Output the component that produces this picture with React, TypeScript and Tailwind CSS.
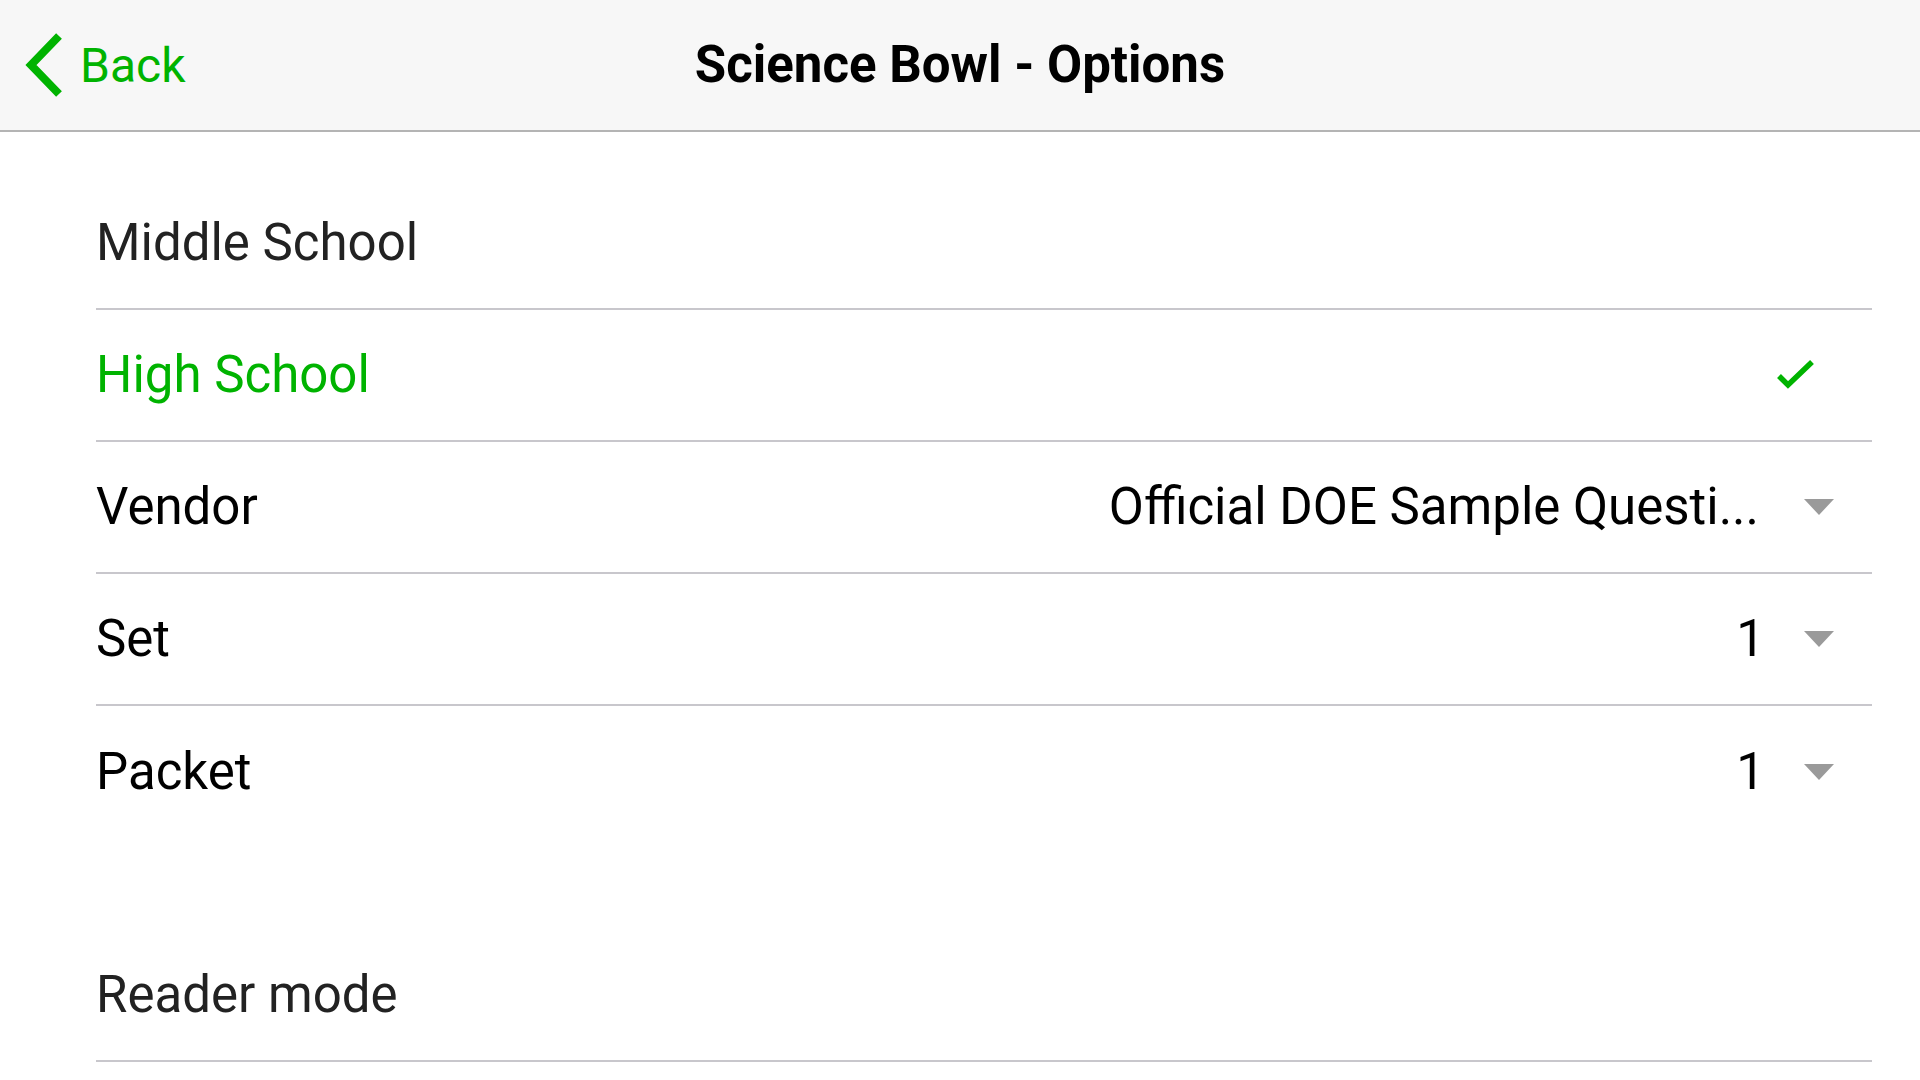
import React from 'react';

function Caret() {
  return (
    <svg width="30" height="16" viewBox="0 0 30 16" className="shrink-0">
      <path d="M0 0 H30 L15 16 Z" fill="#9a9a9a" />
    </svg>
  );
}

function Check() {
  return (
    <svg width="38" height="32" viewBox="0 0 38 32" className="shrink-0">
      <path d="M2 17 L11 26 L35 3" fill="none" stroke="#00b300" strokeWidth="5.5" />
    </svg>
  );
}

type RowProps = {
  label: string;
  value?: string;
  tone?: 'dim' | 'dark' | 'green';
  checked?: boolean;
  last?: boolean;
};

function Row({ label, value, tone = 'dark', checked, last }: RowProps) {
  const color = tone === 'green' ? 'text-[#00b300]' : tone === 'dim' ? 'text-[#222222]' : 'text-black';
  const numeric = value !== undefined && /^\d+$/.test(value);
  return (
    <div
      className={`flex items-center h-[132px] ml-[96px] mr-[48px] ${last ? '' : 'border-b-2 border-[#c8c7cc]'}`}
    >
      <span className={`flex-1 text-[51px] ${color}`}>{label}</span>
      {checked && (
        <div className="mr-[57px]">
          <Check />
        </div>
      )}
      {value !== undefined && (
        <div className={`flex items-center mr-[38px] ${numeric ? 'gap-[39px]' : 'gap-[45px]'}`}>
          <span className="text-[51px] text-black">{value}</span>
          <Caret />
        </div>
      )}
    </div>
  );
}

export default function App() {
  return (
    <div className="w-[1920px] h-[1080px] bg-white overflow-hidden font-['Roboto',sans-serif]">
      <header className="relative flex items-center h-[132px] bg-[#f7f7f7] border-b-2 border-[#b4b4b4]">
        <button className="flex items-center ml-[24px] gap-[16px] text-[#00b300]">
          <svg width="40" height="64" viewBox="0 0 40 64">
            <path d="M35 3 L7 32 L35 61" fill="none" stroke="#00b300" strokeWidth="8" />
          </svg>
          <span className="text-[48px] leading-none pt-[1px]">Back</span>
        </button>
        <h1 className="absolute left-0 right-0 text-center text-[51px] font-bold text-black pointer-events-none">
          Science Bowl - Options
        </h1>
      </header>

      <main className="pt-[46px]">
        <Row label="Middle School" tone="dim" />
        <Row label="High School" tone="green" checked />
        <Row label="Vendor" value="Official DOE Sample Questi..." />
        <Row label="Set" value="1" />
        <Row label="Packet" value="1" last />

        <div className="mt-[92px]">
          <Row label="Reader mode" tone="dim" />
        </div>
      </main>
    </div>
  );
}
